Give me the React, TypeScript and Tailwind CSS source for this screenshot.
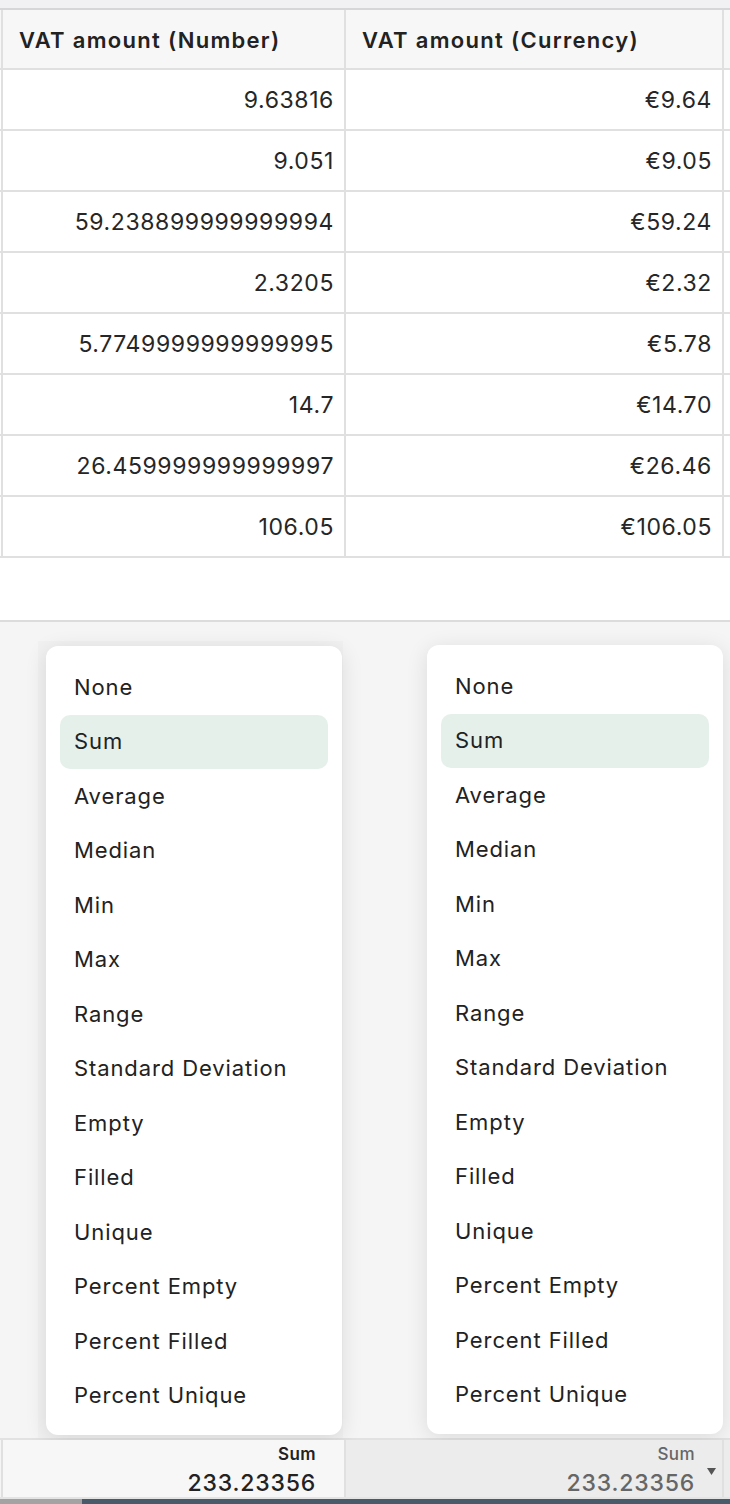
import React from "react";

const rows: [string, string][] = [
  ["9.63816", "€9.64"],
  ["9.051", "€9.05"],
  ["59.238899999999994", "€59.24"],
  ["2.3205", "€2.32"],
  ["5.7749999999999995", "€5.78"],
  ["14.7", "€14.70"],
  ["26.459999999999997", "€26.46"],
  ["106.05", "€106.05"],
];

const options = [
  "None",
  "Sum",
  "Average",
  "Median",
  "Min",
  "Max",
  "Range",
  "Standard Deviation",
  "Empty",
  "Filled",
  "Unique",
  "Percent Empty",
  "Percent Filled",
  "Percent Unique",
];

const AggregateMenu: React.FC<{ selected: string }> = ({ selected }) => (
  <div className="w-[296px] rounded-[12px] bg-white px-[14px] pt-[14px] pb-[12px] shadow-[0_4px_22px_rgba(0,0,0,0.11)]">
    {options.map((opt) => (
      <div
        key={opt}
        className={`flex h-[54.5px] items-center rounded-[10px] px-[14px] text-[22px] tracking-[0.9px] text-[#222] ${
          opt === selected ? "bg-[#e6f0eb]" : ""
        }`}
      >
        {opt}
      </div>
    ))}
  </div>
);

export default function App() {
  return (
    <div className="h-[1504px] w-[730px] overflow-hidden bg-white font-['Inter',sans-serif] text-[#222]">
      {/* strip above the table */}
      <div className="h-[10px] border-b-2 border-[#d6d6d8] bg-[#f1f1f3]" />

      {/* header */}
      <div className="grid h-[60px] grid-cols-[3px_343px_378px_1fr] border-b-2 border-[#e0e0e0] bg-[#f7f7f7]">
        <div className="border-r-2 border-[#e0e0e0]" />
        <div className="flex items-center border-r-2 border-[#e0e0e0] pl-[16px] pt-[2px] text-[22px] font-semibold tracking-[1.3px]">
          VAT amount (Number)
        </div>
        <div className="flex items-center border-r-2 border-[#e0e0e0] pl-[16px] pt-[2px] text-[22px] font-semibold tracking-[1.3px]">
          VAT amount (Currency)
        </div>
        <div />
      </div>

      {/* rows */}
      {rows.map(([num, cur]) => (
        <div
          key={num}
          className="grid h-[61px] grid-cols-[3px_343px_378px_1fr] border-b-2 border-[#e0e0e0] text-[23px] tracking-[0.6px] text-[#262626]"
        >
          <div className="border-r-2 border-[#e0e0e0]" />
          <div className="flex items-center justify-end border-r-2 border-[#e0e0e0] pr-[10px] pt-[1px]">
            {num}
          </div>
          <div className="flex items-center justify-end border-r-2 border-[#e0e0e0] pr-[10px] pt-[1px]">
            {cur}
          </div>
          <div />
        </div>
      ))}

      <div className="h-[62px]" />

      {/* footer area with open aggregate menus */}
      <div className="border-t-2 border-[#dcdcdc] bg-[#f5f5f5]">
        <div className="flex h-[816px] pt-[19px]">
          <div className="ml-[38px] bg-[#f1f1f1] pl-[8px] pr-[1px] pt-[5px]">
            <AggregateMenu selected="Sum" />
          </div>
          <div className="ml-[84px] pt-[4px]">
            <AggregateMenu selected="Sum" />
          </div>
        </div>

        <div className="grid h-[59px] grid-cols-[3px_343px_378px_1fr] border-t-2 border-[#e2e2e2]">
          <div className="border-r-2 border-[#e0e0e0]" />
          <div className="flex flex-col items-end justify-center border-r-2 border-[#e0e0e0] bg-[#f7f7f7] pr-[28px] pt-[3px] leading-none">
            <span className="text-[17px] font-semibold tracking-[0.4px] text-[#222]">Sum</span>
            <span className="mt-[9px] text-[23px] font-medium tracking-[0.8px] text-[#222]">
              233.23356
            </span>
          </div>
          <div className="relative flex flex-col items-end justify-center border-r-2 border-[#e0e0e0] bg-[#ececec] pr-[27px] pt-[3px] leading-none">
            <span className="text-[17px] font-medium tracking-[0.4px] text-[#666]">Sum</span>
            <span className="mt-[9px] text-[23px] font-medium tracking-[0.8px] text-[#666]">
              233.23356
            </span>
            <svg
              className="absolute right-[6px] top-[28px]"
              width="9"
              height="7"
              viewBox="0 0 9 7"
            >
              <path d="M0 0 H9 L4.5 7 Z" fill="#555" />
            </svg>
          </div>
          <div className="bg-[#ececec]" />
        </div>

        {/* bottom scrollbar strip */}
        <div className="flex h-[7px] border-t-2 border-[#e4e4e4]">
          <div className="w-[82px] bg-[#a3a3a3]" />
          <div className="flex-1 bg-[#485b6b]" />
        </div>
      </div>
    </div>
  );
}
